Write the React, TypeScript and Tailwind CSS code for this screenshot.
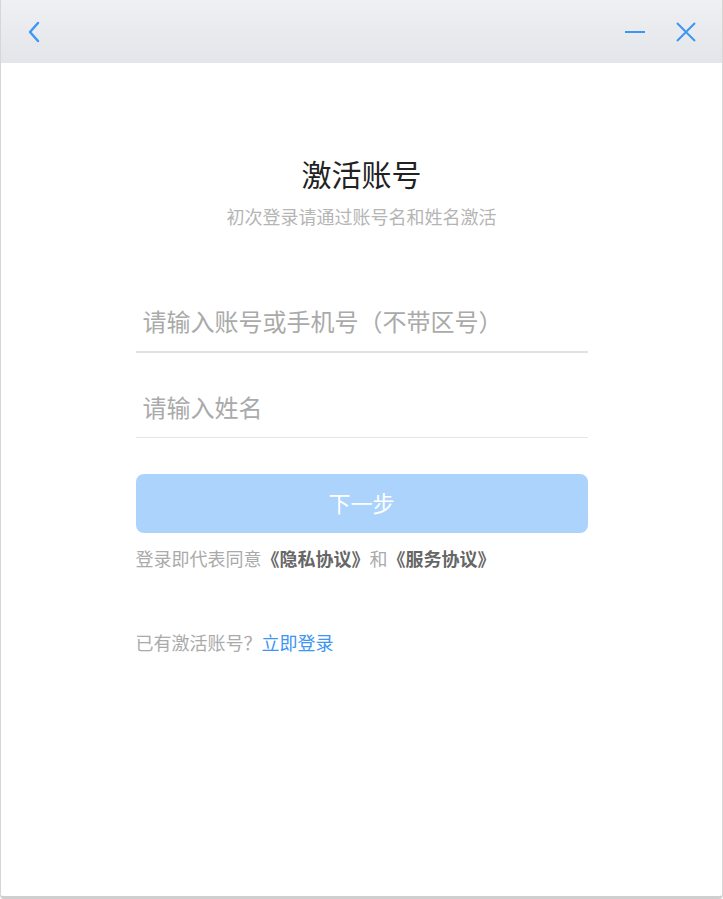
import { useState } from 'react';

const font = { fontFamily: '"Noto Sans CJK SC", "Noto Sans", sans-serif' };

export default function App() {
  const [account, setAccount] = useState('');
  const [name, setName] = useState('');
  const disabled = !account || !name;

  return (
    <div
      style={font}
      className="flex h-[899px] w-[723px] flex-col overflow-hidden rounded-b-[4px] border-x border-b-[3px] border-x-[#d6d6d6] border-b-[#cfcfcf] bg-white"
    >
      <header className="flex h-[63px] shrink-0 items-center justify-between bg-gradient-to-b from-[#eff0f4] to-[#e2e5e9] pl-[25px] pr-[25px]">
        <button className="text-[#3d95f5]">
          <svg width="16" height="22" viewBox="0 0 16 22" fill="none">
            <path d="M12 2 L4 11 L12 20" stroke="currentColor" strokeWidth="2.4" strokeLinecap="round" strokeLinejoin="round" />
          </svg>
        </button>
        <div className="flex items-center gap-[29px] text-[#3d95f5]">
          <svg width="22" height="22" viewBox="0 0 22 22" fill="none">
            <path d="M1 11 H21" stroke="currentColor" strokeWidth="2" />
          </svg>
          <svg width="22" height="22" viewBox="0 0 22 22" fill="none">
            <path d="M2 2 L20 20 M20 2 L2 20" stroke="currentColor" strokeWidth="2" />
          </svg>
        </div>
      </header>

      <main className="flex flex-1 flex-col items-center pt-[90px]">
        <h1 className="text-[30px] leading-[40px] text-[#222]">激活账号</h1>
        <p className="mt-[10px] text-[18px] leading-[26px] text-[#b5b5b5]">初次登录请通过账号名和姓名激活</p>

        <div className="mt-[38px] w-[452px]">
          <input
            value={account}
            onChange={(e) => setAccount(e.target.value)}
            placeholder="请输入账号或手机号（不带区号）"
            className="h-[86px] w-full border-b-2 border-[#e2e2e2] px-[7px] pt-[22px] text-[24px] text-[#333] outline-none placeholder:text-[#aaa]"
          />
          <input
            value={name}
            onChange={(e) => setName(e.target.value)}
            placeholder="请输入姓名"
            className="h-[85px] w-full border-b border-[#e6e6e6] px-[7px] pt-[22px] text-[24px] text-[#333] outline-none placeholder:text-[#aaa]"
          />

          <button
            disabled={disabled}
            className="mt-[36px] flex h-[59px] w-full items-center justify-center rounded-[8px] bg-[#acd3fc] pb-[2px] text-[22px] text-white"
          >
            下一步
          </button>

          <p className="mt-[12px] text-[18px] leading-[26px] text-[#aaa]">
            登录即代表同意<span className="font-bold text-[#666]">《隐私协议》</span>和<span className="font-bold text-[#666]">《服务协议》</span>
          </p>

          <p className="mt-[58px] text-[18px] leading-[26px] text-[#aaa]">
            已有激活账号？<a className="text-[#3d95f5]">立即登录</a>
          </p>
        </div>
      </main>
    </div>
  );
}
